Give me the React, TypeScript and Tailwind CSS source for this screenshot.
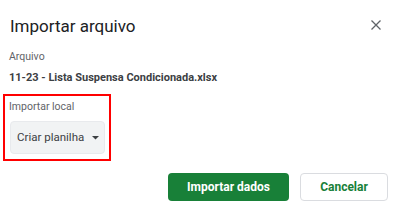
import React from "react";

export default function App() {
  return (
    <div className="w-[400px] h-[216px] bg-white relative overflow-hidden" style={{ fontFamily: "Roboto, 'Liberation Sans', sans-serif" }}>
      <div className="flex items-start justify-between pl-[10px] pr-[19px] pt-[14px]">
        <div className="text-[17px] leading-[24px] text-[#202124]">Importar arquivo</div>
        <svg width="10" height="10" viewBox="0 0 10 10" className="mt-[6px]">
          <path d="M0.5 0.5 L9.5 9.5 M9.5 0.5 L0.5 9.5" stroke="#5f6368" strokeWidth="1.3" />
        </svg>
      </div>
      <div className="pl-[9px] mt-[11px] text-[10.5px] leading-[16px] text-[#5f6368]">Arquivo</div>
      <div className="pl-[9px] mt-[5px] text-[11px] leading-[16px] font-bold text-[#3c4043] whitespace-nowrap">11-23 - Lista Suspensa Condicionada.xlsx</div>
      <div className="ml-[3px] mt-[8px] w-[108px] h-[67px] border-2 border-[#ff0000] pt-[3px] pl-[4px]">
        <div className="text-[10.5px] leading-[16px] text-[#5f6368]">Importar local</div>
        <div className="mt-[6px] ml-[1px] w-[95px] h-[33px] rounded-[4px] bg-[#f1f3f4] border border-[#e8eaed] flex items-center pl-[6px] gap-[8px]">
          <span className="text-[11.5px] text-[#3c4043] whitespace-nowrap">Criar planilha</span>
          <svg width="7" height="4" viewBox="0 0 7 4"><path d="M0 0 L7 0 L3.5 3.5 Z" fill="#3c4043" /></svg>
        </div>
      </div>
      <div className="flex justify-end gap-[11px] pr-[12px] mt-[12px]">
        <button className="w-[121px] h-[28px] rounded-[4px] bg-[#188038] text-white text-[12px] font-bold">Importar dados</button>
        <button className="w-[88px] h-[28px] rounded-[4px] bg-white border border-[#dadce0] text-[#188038] text-[12px] font-bold">Cancelar</button>
      </div>
    </div>
  );
}
